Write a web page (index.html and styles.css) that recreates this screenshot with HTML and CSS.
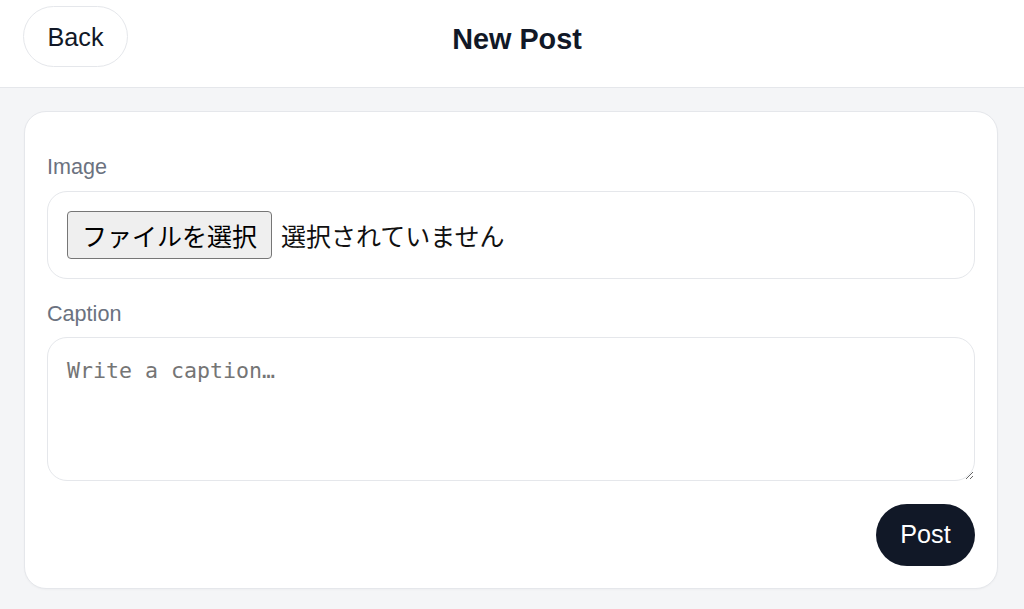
FILE: index.html
```html
<!DOCTYPE html>
<html lang="ja">
<head>
<meta charset="utf-8">
<title>New Post</title>
<link rel="stylesheet" href="styles.css">
</head>
<body>
<header class="topbar">
  <button class="back-btn" type="button">Back</button>
  <h1 class="title">New Post</h1>
  <div class="spacer"></div>
</header>
<main class="main">
  <form class="card">
    <div class="field">
      <label class="label">Image</label>
      <div class="file-box">
        <span class="file-btn">ファイルを選択</span>
        <span class="file-name">選択されていません</span>
      </div>
    </div>
    <div class="field">
      <label class="label label-caption" for="caption">Caption</label>
      <textarea id="caption" class="caption" placeholder="Write a caption…"></textarea>
    </div>
    <div class="actions">
      <button class="post-btn" type="button">Post</button>
    </div>
  </form>
</main>
</body>
</html>
```
FILE: styles.css
```css
* { box-sizing: border-box; }
html, body { margin: 0; padding: 0; }
body {
  background: #f4f5f7;
  font-family: "Liberation Sans", Arial, sans-serif;
  color: #111827;
  min-height: 609px;
}
.topbar {
  display: flex;
  align-items: flex-start;
  background: #ffffff;
  border-bottom: 1px solid #e5e7eb;
  padding: 6px 23px 20px 23px;
}
.back-btn {
  font-family: "Liberation Sans", Arial, sans-serif;
  font-size: 25.2px;
  line-height: 37px;
  color: #111827;
  background: #ffffff;
  border: 1px solid #e5e7eb;
  border-radius: 999px;
  padding: 12px 23.5px 10px 23.5px;
  height: 61px;
  width: 105px;
}
.title {
  flex: 1;
  margin: 0;
  text-align: center;
  font-size: 28.8px;
  font-weight: 700;
  line-height: 43px;
  padding-top: 11.5px;
  color: #111827;
}
.spacer { width: 95px; }
.main {
  padding: 23px 26px 0 24px;
}
.card {
  background: #ffffff;
  border: 1px solid #e5e7eb;
  border-radius: 22px;
  padding: 39px 22px 22px 22px;
  display: flex;
  flex-direction: column;
  gap: 18px;
  box-shadow: 0 1px 2px rgba(0,0,0,0.03);
}
.field {
  display: flex;
  flex-direction: column;
}
.label {
  font-size: 21.6px;
  line-height: 32.4px;
  color: #6b7280;
  margin-bottom: 8px;
}
.label-caption {
  margin-top: 1px;
  margin-bottom: 6px;
}
.file-box {
  display: flex;
  align-items: center;
  gap: 9px;
  height: 88px;
  border: 1px solid #e5e7eb;
  border-radius: 20px;
  padding: 0 19px;
  font-family: "Noto Sans CJK JP", sans-serif;
  font-size: 25px;
}
.file-btn {
  display: inline-block;
  height: 48px;
  width: 205px;
  line-height: 46px;
  text-align: center;
  background: #efefef;
  border: 1px solid #767676;
  border-radius: 4px;
  color: #000000;
  font-size: 25px;
}
.file-name {
  color: #111111;
  line-height: 46px;
}
.caption {
  display: block;
  width: 100%;
  height: 144px;
  border: 1px solid #e5e7eb;
  border-radius: 20px;
  padding: 17px 19px;
  font-family: "DejaVu Sans Mono", "Liberation Mono", monospace;
  font-size: 21.6px;
  line-height: 1.5;
  color: #111827;
  background: #ffffff;
  outline: none;
  margin: 0;
}
.caption::placeholder { color: #757575; }
.actions {
  display: flex;
  justify-content: flex-end;
  margin-top: 5px;
}
.post-btn {
  font-family: "Liberation Sans", Arial, sans-serif;
  font-size: 25.2px;
  line-height: 38px;
  height: 62px;
  width: 99px;
  padding: 11px 0 13px 0;
  background: #111827;
  color: #ffffff;
  border: none;
  border-radius: 999px;
}
```
